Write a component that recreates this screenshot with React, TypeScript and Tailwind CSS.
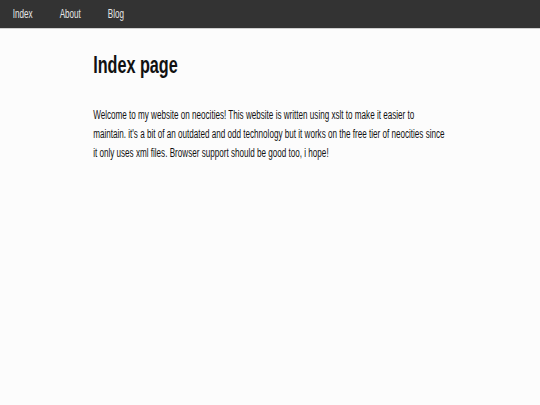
export default function App() {
  return (
    <div className="h-[405px] w-[540px] overflow-hidden bg-[#fcfcfc]">
      {/* the page is drawn at 800px wide and squeezed into the 540px window */}
      <div
        className="h-[405px] w-[800px] origin-top-left scale-x-[0.675] bg-[#fcfcfc] text-[#111]"
        style={{ fontFamily: '"Liberation Sans", Arial, sans-serif' }}
      >
        <nav className="flex h-[29px] items-center gap-[40px] border-b border-[#cfcfcf] bg-[#333333] px-[19px] text-[12px] text-[#e6e6e6]">
          <a>Index</a>
          <a>About</a>
          <a>Blog</a>
        </nav>
        <main className="mx-auto w-[524px] pt-[22px]">
          <h1 className="text-[24px] font-bold leading-[28px]">Index page</h1>
          <p className="mt-[27px] text-[12px] leading-[19px]">
            Welcome to my website on neocities! This website is written using xslt to make it easier to
            maintain. it's a bit of an outdated and odd technology but it works on the free tier of
            neocities since it only uses xml files. Browser support should be good too, i hope!
          </p>
        </main>
      </div>
    </div>
  );
}
